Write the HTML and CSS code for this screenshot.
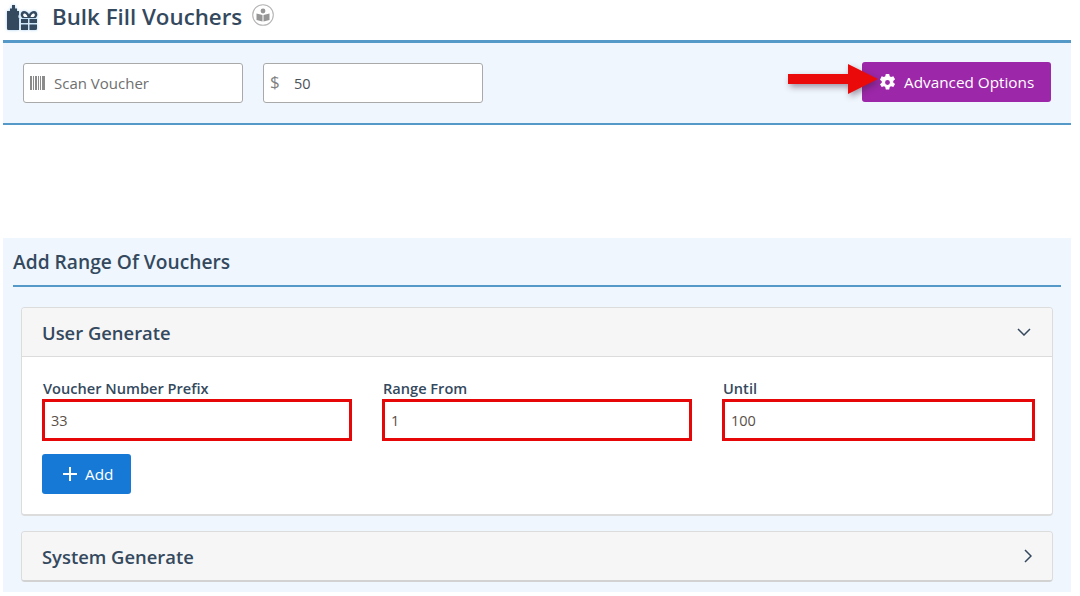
FILE: index.html
```html
<!DOCTYPE html>
<html lang="en">
<head>
<meta charset="utf-8">
<title>Bulk Fill Vouchers</title>
<link rel="stylesheet" href="styles.css">
</head>
<body>
<header class="page-title">
  <svg class="title-icon" viewBox="0 0 32 25" width="32" height="25" aria-hidden="true">
    <path fill="#34495e" d="M1 6h3V3.500h2V0h3v3.500h2V6h2v3.500c-1 1.500-1 3 .5 4.500H13V25H2.500A1.500 1.500 0 0 1 1 23.500z"/>
    <path fill="#34495e" d="M15 14h7v4h-7zM23.500 14H31v4h-7.500zM15 19.500h7V25h-7zM23.500 19.500H31v4a1.500 1.500 0 0 1-1.500 1.500h-6z"/>
    <path fill="#34495e" d="M16.500 13c-3-2-2-7 1.500-7 2 0 4 1.500 5 3.500C24 7.500 26 6 28 6c3.500 0 4.500 5 1.500 7z"/>
    <path fill="#fff" d="M18.500 12c-2-1-1.500-3.500 0-3.500 1.200 0 2.500 1.500 3 3.500zM27.500 12c2-1 1.500-3.500 0-3.500-1.200 0-2.500 1.500-3 3.500z"/>
  </svg>
  <h1>Bulk Fill Vouchers</h1>
  <svg class="help-icon" viewBox="0 0 22 22" width="22" height="22" aria-hidden="true">
    <circle cx="11" cy="11" r="10.300" fill="#fff" stroke="#b5b5b5" stroke-width="1.100"/>
    <circle cx="11" cy="7" r="2.400" fill="#969696"/>
    <path fill="#969696" d="M4.500 9.500l6 1.500v6.500l-6-1.500zM17.500 9.500l-6 1.500v6.500l6-1.500z"/>
  </svg>
</header>

<section class="scan-bar">
  <div class="field">
    <svg class="barcode" viewBox="0 0 15 14" width="15" height="14" aria-hidden="true">
      <path fill="#8b8b8b" d="M0 0h2v14H0zM3 0h1v14H3zM5 0h2v14H5zM8 0h1v14H8zM10 0h1v14h-1zM12 0h3v14h-3z"/>
    </svg>
    <span class="placeholder">Scan Voucher</span>
  </div>
  <div class="field">
    <span class="currency">$</span>
    <span class="value">50</span>
  </div>
  <button class="btn btn-purple" type="button">
    <svg viewBox="0 0 16 16" width="17" height="17" aria-hidden="true">
      <path fill="#fff" fill-rule="evenodd" d="M6.400 0h3.200l.5 2.200 1.200.7 2.200-.7 1.600 2.800-1.700 1.500v1.400l1.700 1.500-1.600 2.800-2.200-.7-1.200.7-.5 2.300H6.400l-.5-2.300-1.200-.7-2.200.7L.9 9.700l1.700-1.500V6.800L.9 5.300l1.600-3.100 2.200.7 1.200-.7zM8 5.700a2.300 2.300 0 1 0 0 4.600 2.300 2.300 0 0 0 0-4.600z"/>
    </svg>
    Advanced Options
    <svg class="arrow" viewBox="0 0 90 30" width="90" height="30" aria-hidden="true">
      <path fill="#ea0a0a" d="M0 10h60V0l30 15-30 15V20H0z"/>
    </svg>
  </button>
</section>

<section class="range">
  <h2>Add Range Of Vouchers</h2>
  <div class="card">
    <div class="card-head card-head-open">
      <h3>User Generate</h3>
      <svg viewBox="0 0 14 8" width="14" height="8" aria-hidden="true"><path d="M1 1l6 6 6-6" fill="none" stroke="#34495e" stroke-width="1.500"/></svg>
    </div>
    <div class="card-body">
      <div class="form-grid">
        <div class="form-col">
          <label>Voucher Number Prefix</label>
          <div class="red-input">33</div>
        </div>
        <div class="form-col">
          <label>Range From</label>
          <div class="red-input">1</div>
        </div>
        <div class="form-col form-col-wide">
          <label>Until</label>
          <div class="red-input">100</div>
        </div>
      </div>
      <button class="btn btn-blue" type="button">
        <svg viewBox="0 0 14 14" width="14" height="14" aria-hidden="true"><path d="M7 0v14M0 7h14" stroke="#fff" stroke-width="2"/></svg>
        Add
      </button>
    </div>
  </div>
  <div class="card card-closed">
    <div class="card-head">
      <h3>System Generate</h3>
      <svg class="chev-right" viewBox="0 0 8 14" width="8" height="14" aria-hidden="true"><path d="M1 1l6 6-6 6" fill="none" stroke="#34495e" stroke-width="1.500"/></svg>
    </div>
  </div>
</section>
</body>
</html>
```

FILE: styles.css
```css
* { box-sizing: border-box; }
html, body { margin: 0; height: 596px; overflow: hidden; }
body {
  padding: 0 9px 0 3px;
  background: #fff;
  font-family: "Open Sans", "Liberation Sans", sans-serif;
  color: #34495e;
}
h1, h2, h3 { margin: 0; font-weight: 400; }

.page-title {
  display: flex;
  align-items: center;
  height: 40px;
  padding: 0 0 6px 3px;
}
.title-icon {
  flex: none;
  filter: drop-shadow(0 0 1.500px rgba(90, 170, 230, .55));
}
.page-title h1 {
  margin: -1px 0 0 14px;
  font-size: 22.300px;
  line-height: 30px;
  font-weight: 600;
}
.help-icon { margin: -5px 0 0 10px; }

.scan-bar {
  display: flex;
  align-items: center;
  gap: 20px;
  height: 85px;
  padding: 0 20px;
  background: #eff6fd;
  border-top: 3px solid #5499c7;
  border-bottom: 2px solid #5499c7;
}
.field {
  display: flex;
  align-items: center;
  width: 220px;
  height: 40px;
  padding: 0 6px;
  background: #fff;
  border: 1px solid #a9a9a9;
  border-radius: 3px;
  font-size: 15px;
}
.barcode { margin-right: 9px; margin-top: -1px; }
.placeholder { color: #6f6f6f; margin-top: -1px; }
.currency { width: 24px; font-size: 17px; font-weight: 500; color: #808080; margin-top: -3px; }
.value { color: #495057; font-size: 14.500px; }

.btn {
  display: inline-flex;
  align-items: center;
  border: 0;
  border-radius: 3px;
  color: #fff;
  font: 400 15.300px "Open Sans", "Liberation Sans", sans-serif;
}
.btn-purple {
  position: relative;
  gap: 8px;
  width: 189px;
  height: 40px;
  margin-left: auto;
  margin-top: -2px;
  padding: 0 0 0 17px;
  background: #9c27a8;
}
.arrow {
  position: absolute;
  left: -74px;
  top: 2px;
  filter: drop-shadow(2px 3px 3px rgba(60, 30, 60, .45));
}
.btn-blue {
  gap: 8px;
  width: 89px;
  height: 40px;
  margin-top: 13px;
  padding: 0 0 0 21px;
  background: #1679d6;
}

.range {
  height: 354px;
  margin-top: 113px;
  padding: 0 10px;
  background: #eff6fd;
}
.range h2 {
  height: 49px;
  padding-top: 8px;
  border-bottom: 2px solid #5499c7;
  font-size: 19.200px;
  line-height: 31px;
  font-weight: 600;
}
.card {
  margin: 20px 8px 0;
  background: #fff;
  border: 1px solid #dcdcdc;
  border-bottom-width: 2px;
  border-radius: 4px;
  overflow: hidden;
}
.card-closed { margin-top: 15px; border-bottom-color: #d2d2d2; }
.card-head {
  display: flex;
  align-items: center;
  justify-content: space-between;
  height: 48px;
  padding: 0 21px 0 20px;
  background: #f6f6f6;
}
.card-head-open { height: 49px; border-bottom: 1px solid #dcdcdc; }
.card-head h3 { margin-top: 1px; font-size: 18.400px; font-weight: 600; }
.chev-right { margin-right: -1px; }
.card-body { height: 157px; padding: 23px 20px 0; }
.form-grid { display: flex; gap: 30px; }
.form-col { display: flex; flex-direction: column; width: 310px; }
.form-col-wide { width: 313px; margin-right: -3px; }
.form-col label {
  font-size: 14.600px;
  line-height: 17px;
  font-weight: 600;
  padding-left: 1px;
}
.red-input {
  height: 42px;
  margin-top: 2px;
  padding-left: 6px;
  border: 3px solid #e60808;
  background: #fff;
  font-size: 14.500px;
  line-height: 38px;
  color: #5a5048;
}
```
